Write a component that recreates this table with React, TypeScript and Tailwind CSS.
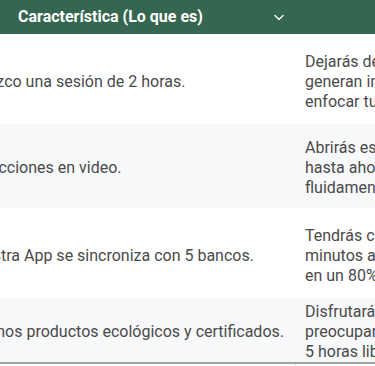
import React from "react";

const rows = [
  {
    left: "Ofrezco una sesión de 2 horas.",
    off: "ml-[-34px]",
    right: [
      "Dejarás de perder tiempo en tareas que",
      "generan interrupciones y podrás",
      "enfocar tu energía en lo importante.",
    ],
    h: "h-[90px] pt-[6px]",
    bg: "bg-white",
  },
  {
    left: "Doy lecciones en video.",
    off: "ml-[-45px]",
    right: [
      "Abrirás esa puerta que te ha costado",
      "hasta ahora y hablarás el idioma",
      "fluidamente en pocas semanas.",
    ],
    h: "h-[84px] pt-[4px]",
    bg: "bg-[#f7f8fa]",
  },
  {
    left: "Nuestra App se sincroniza con 5 bancos.",
    off: "ml-[-36px]",
    right: [
      "Tendrás claras tus finanzas en 5",
      "minutos al día y reducirás errores",
      "en un 80%.",
    ],
    h: "h-[91px] pt-[4px]",
    bg: "bg-white",
  },
  {
    left: "Buenos productos ecológicos y certificados.",
    off: "ml-[-31px]",
    right: [
      "Disfrutarás de tu alimentación sin",
      "preocuparte y ganarás",
      "5 horas libres a la semana.",
    ],
    h: "h-[63px] pt-[2px]",
    bg: "bg-[#f7f8fa]",
  },
];

function Chevron() {
  return (
    <svg width="10" height="7" viewBox="0 0 10 7" fill="none">
      <path d="M1 1.5 L5 5.5 L9 1.5" stroke="white" strokeWidth="1.4" strokeLinecap="round" strokeLinejoin="round" />
    </svg>
  );
}

export default function App() {
  return (
    <div className="w-[375px] h-[366px] overflow-hidden bg-white font-['Roboto',sans-serif]">
      <div className="flex h-[34px] items-center bg-[#356650]">
        <div className="flex w-[289px] shrink-0 items-center pl-[18px] pr-[5px]">
          <span className="text-[16px] font-bold leading-5 text-white">Característica (Lo que es)</span>
          <span className="ml-auto flex items-center pt-[1px]">
            <Chevron />
          </span>
        </div>
      </div>
      <div className="flex flex-col border-b-2 border-[#9aa5a0]">
        {rows.map((r, i) => (
          <div key={i} className={`flex ${r.h} ${r.bg} items-center`}>
            <div className="w-[289px] shrink-0 overflow-hidden">
              <div className={`${r.off} whitespace-nowrap text-[16px] leading-5 text-[#4a4a4a]`}>{r.left}</div>
            </div>
            <div className="ml-[16px] flex flex-col whitespace-nowrap text-[16px] leading-5 text-[#4a4a4a]">
              {r.right.map((l, j) => (
                <span key={j}>{l}</span>
              ))}
            </div>
          </div>
        ))}
      </div>
      <div className="ml-[295px] h-[4px] w-px bg-[#e2e2e2]" />
    </div>
  );
}
